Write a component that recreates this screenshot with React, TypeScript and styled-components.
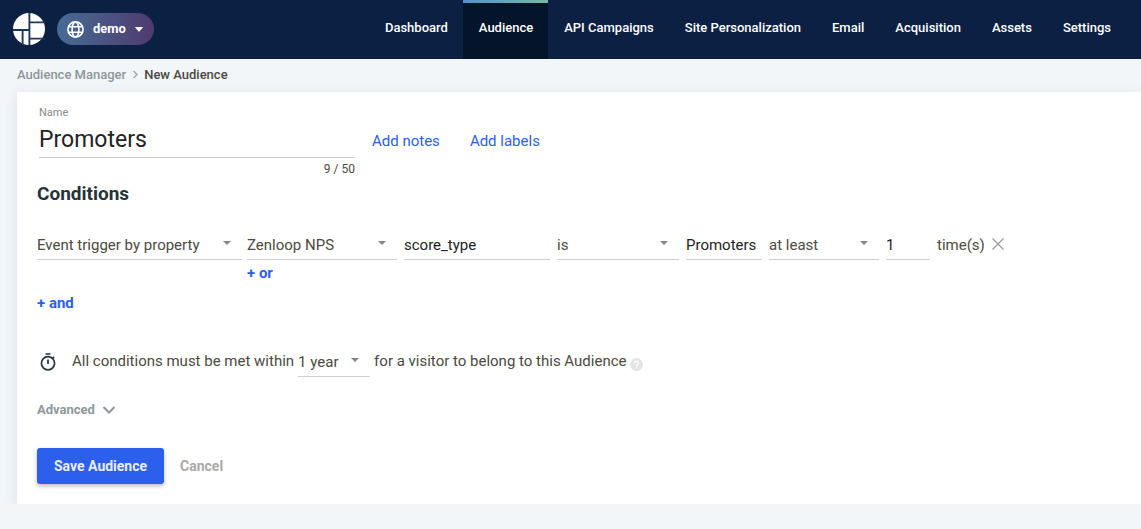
import React from "react";
import styled, { createGlobalStyle } from "styled-components";

const GlobalStyle = createGlobalStyle`
  *, *::before, *::after { box-sizing: border-box; }
  body {
    margin: 0;
    background: #f2f6f9;
    color: #4b4a41;
    font-family: Roboto, "Liberation Sans", sans-serif;
    font-size: 15px;
    line-height: 20px;
  }
  button, input, select { font: inherit; color: inherit; }
`;

const Header = styled.header`
  display: flex;
  height: 59px;
  padding: 0 15px 0 13px;
  background: #0b2042;
  color: #fff;
  font-size: 13px;
  font-weight: 500;
`;

const Brand = styled.div`
  display: flex;
  align-items: center;
  gap: 12px;
  height: 58px;
`;

const SiteButton = styled.button`
  display: flex;
  align-items: center;
  gap: 9px;
  height: 32px;
  padding: 0 11px 0 10px;
  border: 0;
  border-radius: 16px;
  background: linear-gradient(90deg, #466c94, #4f3a70);
  font-weight: 700;
`;

const Nav = styled.nav`
  display: flex;
  margin-left: auto;
`;

const NavLink = styled.a<{ $active?: boolean }>`
  position: relative;
  display: flex;
  align-items: center;
  padding: 0 15px 4px 16px;
  color: #fff;
  text-decoration: none;
  white-space: nowrap;
  background: ${(p) => (p.$active ? "#04142a" : "transparent")};

  &::before {
    content: "";
    display: ${(p) => (p.$active ? "block" : "none")};
    position: absolute;
    inset: 0 0 auto;
    height: 3px;
    background: linear-gradient(90deg, #5790cc, #74bba5);
  }
`;

const Breadcrumb = styled.nav`
  display: flex;
  align-items: center;
  gap: 6px;
  height: 33px;
  padding: 0 17px 2px;
  font-size: 13px;
  font-weight: 500;
`;

const CrumbLink = styled.a`
  color: #8d979a;
  text-decoration: none;
`;

const Card = styled.main`
  margin-left: 17px;
  padding: 13px 20px 20px;
  background: #fff;
  box-shadow: 0 3px 12px rgba(30, 60, 90, 0.12);
`;

const TopRow = styled.div`
  display: flex;
  align-items: center;
  gap: 30px;
  padding-left: 2px;
`;

const NameField = styled.div`
  display: flex;
  flex-direction: column;
  width: 316px;
  margin-right: -13px;
`;

const NameLabel = styled.label`
  color: #8a8a8a;
  font-size: 11px;
  line-height: 16px;
`;

const NameInput = styled.input`
  height: 37px;
  padding: 0;
  border: 0;
  border-bottom: 1px solid #cccfcf;
  background: transparent;
  color: #222;
  font-size: 23px;
`;

const Counter = styled.span`
  margin-top: 3px;
  font-size: 12px;
  line-height: 16px;
  text-align: right;
`;

const TextButton = styled.button<{ $bold?: boolean }>`
  padding: 0;
  border: 0;
  background: none;
  color: #2b5fec;
  font-weight: ${(p) => (p.$bold ? 700 : 400)};
`;

const Heading = styled.h2`
  margin: 5px 0 24px;
  color: #253238;
  font-size: 19px;
  line-height: 24px;
`;

const ConditionRow = styled.div`
  display: flex;
  align-items: flex-start;
  gap: 7px;
`;

const Group = styled.div`
  display: flex;
  flex-wrap: wrap;
  gap: 5px;
`;

const Stack = styled.div`
  display: flex;
  flex-direction: column;
  align-items: flex-start;
  gap: 3px;
`;

const Field = styled.div<{ $width: number }>`
  display: grid;
  align-items: center;
  width: ${(p) => p.$width}px;
  height: 30px;
  border-bottom: 1px solid #cccfcf;

  > * { grid-area: 1 / 1; }
  > svg {
    justify-self: end;
    margin: 0 11px 4px 0;
    pointer-events: none;
  }
`;

const Select = styled.select`
  appearance: none;
  width: 100%;
  padding: 0;
  border: 0;
  background: transparent;
`;

const Input = styled.input`
  width: 100%;
  padding: 0;
  border: 0;
  background: transparent;
  color: #222;
`;

const Unit = styled.span`
  line-height: 30px;
`;

const RemoveButton = styled.button`
  display: flex;
  align-items: center;
  height: 28px;
  padding: 0;
  border: 0;
  background: none;
`;

const AndRow = styled.div`
  display: flex;
  margin-top: 10px;
`;

const WindowRow = styled.div`
  display: flex;
  align-items: center;
  gap: 4px;
  margin-top: 34px;
`;

const WindowText = styled.span`
  padding-bottom: 2px;
`;

const ClockIcon = styled.svg`
  margin-right: 9px;
`;

const HelpIcon = styled.svg`
  margin-top: 4px;
`;

const AdvancedButton = styled.button`
  display: flex;
  align-items: center;
  gap: 7px;
  height: 20px;
  margin: 23px 0 28px;
  padding: 0;
  border: 0;
  background: none;
  color: #8d979a;
  font-size: 13px;
  font-weight: 700;
`;

const Actions = styled.div`
  display: flex;
  align-items: center;
  gap: 16px;
  font-size: 14px;
  font-weight: 700;
`;

const SaveButton = styled.button`
  height: 36px;
  padding: 0 17px;
  border: 0;
  border-radius: 3px;
  background: #2b5fec;
  color: #e8eefd;
  box-shadow: 0 2px 4px rgba(0, 0, 0, 0.28);
`;

const CancelButton = styled.button`
  padding: 0;
  border: 0;
  background: none;
  color: #aaaaa5;
`;

const navItems = [
  "Dashboard",
  "Audience",
  "API Campaigns",
  "Site Personalization",
  "Email",
  "Acquisition",
  "Assets",
  "Settings",
];

const Caret = () => (
  <svg width="8" height="4" viewBox="0 0 8 4" aria-hidden="true">
    <path d="M0 0h8L4 4z" fill="#85858a" />
  </svg>
);

function SelectField({ label, value, width }: { label: string; value: string; width: number }) {
  return (
    <Field $width={width}>
      <Select aria-label={label} defaultValue={value}>
        <option>{value}</option>
      </Select>
      <Caret />
    </Field>
  );
}

function TextField({ label, value, width }: { label: string; value: string; width: number }) {
  return (
    <Field $width={width}>
      <Input aria-label={label} defaultValue={value} />
    </Field>
  );
}

export default function App() {
  return (
    <>
      <GlobalStyle />
      <Header>
        <Brand>
          <svg width="32" height="32" viewBox="0 0 32 32" aria-hidden="true">
            <circle cx="16" cy="16" r="16" fill="#fff" />
            <path
              d="M16.4 0v32M0 17h16.4M9.6 17v15M16.4 9.4H32M16.4 25.6H32"
              fill="none"
              stroke="#1f3858"
              strokeWidth="1.9"
            />
          </svg>
          <SiteButton>
            <svg width="17" height="17" viewBox="0 0 17 17" fill="none" stroke="#fff" strokeWidth="1.6" aria-hidden="true">
              <circle cx="8.5" cy="8.5" r="7.6" />
              <ellipse cx="8.5" cy="8.5" rx="3.4" ry="7.6" />
              <path d="M1.5 5.8h14M1.5 11.2h14" />
            </svg>
            <span>demo</span>
            <svg width="8" height="5" viewBox="0 0 8 5" aria-hidden="true">
              <path d="M0 .3Q0 0 .4 0h7.2q.4 0 .4.3L4.4 4.6q-.4.4-.8 0z" fill="#fff" />
            </svg>
          </SiteButton>
        </Brand>
        <Nav aria-label="Main">
          {navItems.map((item) => (
            <NavLink key={item} href="#" $active={item === "Audience"}>
              {item}
            </NavLink>
          ))}
        </Nav>
      </Header>
      <Breadcrumb aria-label="Breadcrumb">
        <CrumbLink href="#">Audience Manager</CrumbLink>
        <svg width="6" height="9" viewBox="0 0 6 9" fill="none" stroke="#a3aaac" strokeWidth="1.5" aria-hidden="true">
          <path d="M1.5 1l3.5 3.5L1.5 8" />
        </svg>
        <span>New Audience</span>
      </Breadcrumb>
      <Card>
        <TopRow>
          <NameField>
            <NameLabel htmlFor="name">Name</NameLabel>
            <NameInput id="name" defaultValue="Promoters" />
            <Counter>9 / 50</Counter>
          </NameField>
          <TextButton>Add notes</TextButton>
          <TextButton>Add labels</TextButton>
        </TopRow>
        <Heading>Conditions</Heading>
        <ConditionRow>
          <Group>
            <SelectField label="Condition type" value="Event trigger by property" width={205} />
            <Stack>
              <SelectField label="Event" value="Zenloop NPS" width={150} />
              <TextButton $bold>+ or</TextButton>
            </Stack>
          </Group>
          <TextField label="Property" value="score_type" width={146} />
          <SelectField label="Operator" value="is" width={122} />
          <TextField label="Value" value="Promoters" width={76} />
          <SelectField label="Frequency" value="at least" width={110} />
          <TextField label="Count" value="1" width={44} />
          <Unit>time(s)</Unit>
          <RemoveButton aria-label="Remove condition">
            <svg width="12" height="12" viewBox="0 0 12 12" stroke="#9d9d9d" strokeWidth="1.4" aria-hidden="true">
              <path d="M.5.5l11 11M11.5.5l-11 11" />
            </svg>
          </RemoveButton>
        </ConditionRow>
        <AndRow>
          <TextButton $bold>+ and</TextButton>
        </AndRow>
        <WindowRow>
          <ClockIcon width="22" height="20" viewBox="0 0 22 20" fill="none" stroke="#253238" strokeWidth="1.7" aria-hidden="true">
            <circle cx="11" cy="11.3" r="6.6" />
            <path d="M8.5 2h5M11 7.5v4.5M15.5 6.3l1.5-1.5" />
          </ClockIcon>
          <WindowText>All conditions must be met within</WindowText>
          <SelectField label="Time window" value="1 year" width={72} />
          <WindowText>for a visitor to belong to this Audience</WindowText>
          <HelpIcon width="13" height="13" viewBox="0 0 13 13" fill="none" aria-hidden="true">
            <circle cx="6.5" cy="6.5" r="6.5" fill="#e4e4e4" />
            <path d="M4.6 5.2a1.9 1.9 0 1 1 2.8 1.6c-.6.3-.9.6-.9 1.3M6.5 9.2v1.2" stroke="#fff" strokeWidth="1.3" />
          </HelpIcon>
        </WindowRow>
        <AdvancedButton>
          Advanced
          <svg width="14" height="8" viewBox="0 0 14 8" fill="none" stroke="#8d979a" strokeWidth="2" aria-hidden="true">
            <path d="M1.5 1L7 6.5 12.5 1" />
          </svg>
        </AdvancedButton>
        <Actions>
          <SaveButton>Save Audience</SaveButton>
          <CancelButton>Cancel</CancelButton>
        </Actions>
      </Card>
    </>
  );
}
